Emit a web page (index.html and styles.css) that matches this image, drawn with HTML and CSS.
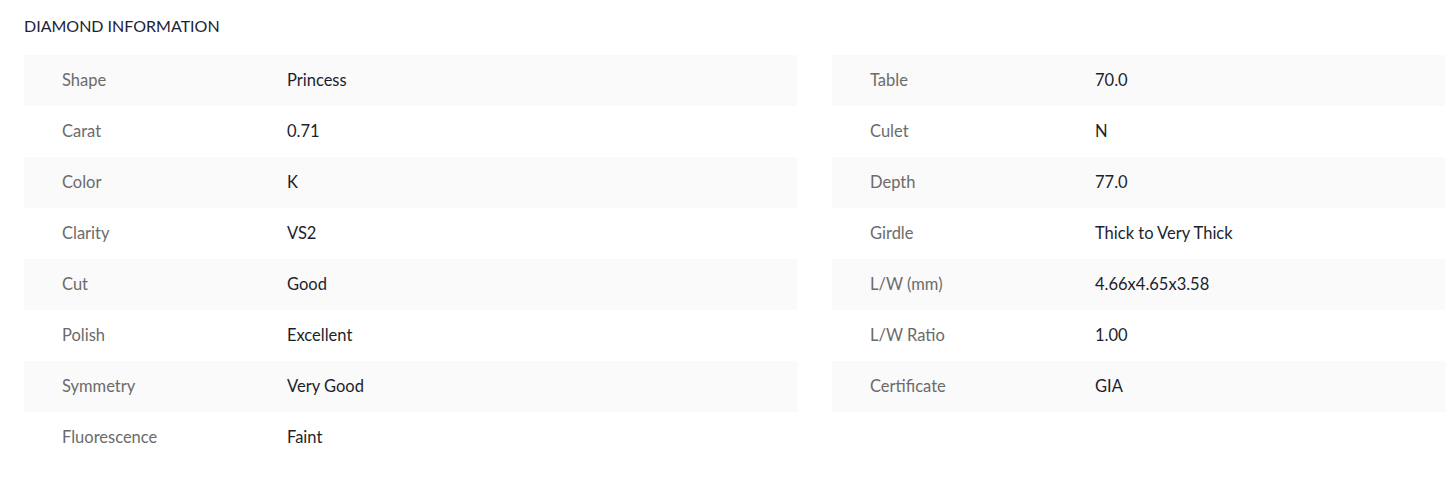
FILE: index.html
```html
<!DOCTYPE html>
<html lang="en">
<head>
    <meta charset="UTF-8">
    <title>Diamond Information</title>
    <link rel="stylesheet" href="styles.css">
</head>
<body>
    <section class="info">
        <h2 class="info_title">DIAMOND INFORMATION</h2>

        <div class="info_grid">
            <div class="info_table">
                <div class="row"><span class="label">Shape</span><span class="value">Princess</span></div>
                <div class="row"><span class="label">Carat</span><span class="value">0.71</span></div>
                <div class="row"><span class="label">Color</span><span class="value">K</span></div>
                <div class="row"><span class="label">Clarity</span><span class="value">VS2</span></div>
                <div class="row"><span class="label">Cut</span><span class="value">Good</span></div>
                <div class="row"><span class="label">Polish</span><span class="value">Excellent</span></div>
                <div class="row"><span class="label">Symmetry</span><span class="value">Very Good</span></div>
                <div class="row"><span class="label">Fluorescence</span><span class="value">Faint</span></div>
            </div>

            <div class="info_table">
                <div class="row"><span class="label">Table</span><span class="value">70.0</span></div>
                <div class="row"><span class="label">Culet</span><span class="value">N</span></div>
                <div class="row"><span class="label">Depth</span><span class="value">77.0</span></div>
                <div class="row"><span class="label">Girdle</span><span class="value">Thick to Very Thick</span></div>
                <div class="row"><span class="label">L/W (mm)</span><span class="value">4.66x4.65x3.58</span></div>
                <div class="row"><span class="label">L/W Ratio</span><span class="value">1.00</span></div>
                <div class="row"><span class="label">Certificate</span><span class="value">GIA</span></div>
            </div>
        </div>
    </section>
</body>
</html>
```

FILE: styles.css
```css
* {
    margin: 0;
    padding: 0;
    box-sizing: border-box;
}
body{
    font-family: 'Lato', 'Noto Sans', sans-serif;
    background: #ffffff;
    overflow: hidden;
}
.info{
    padding: 16px 0 0 24px;
}
.info_title{
    font-size: 16px;
    font-weight: 400;
    color: #1c2236;
    line-height: 20px;
    margin-bottom: 19px;
}
.info_grid{
    display: grid;
    grid-template-columns: 773px 1fr;
    column-gap: 35px;
    align-items: start;
}
.row{
    display: flex;
    align-items: center;
    height: 51px;
    padding-left: 38px;
    padding-bottom: 2px;
    font-size: 16.5px;
}
.row:nth-child(odd){
    background-color: #fafafa;
}
.label{
    width: 225px;
    color: #6b6b6b;
}
.value{
    color: #1c1f2e;
}
```
